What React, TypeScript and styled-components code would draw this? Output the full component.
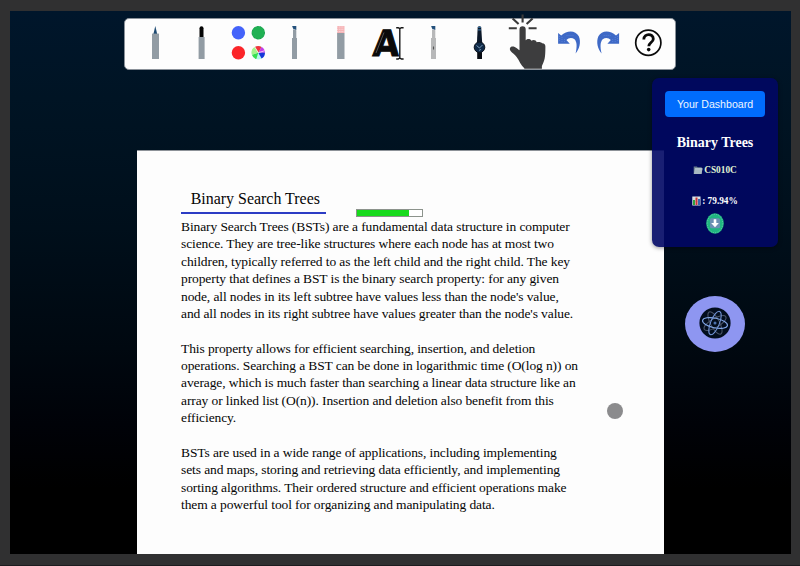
import React from "react";
import styled, { createGlobalStyle } from "styled-components";

const GlobalStyle = createGlobalStyle`
  * { box-sizing: border-box; }
  body { margin: 0; overflow: hidden; background: #303031; }
`;

const Frame = styled.div`
  width: 800px;
  height: 566px;
  padding: 11px 9px 12px 10px;
  background: #303031;
  border-bottom: 1px solid #1c1c1f;
`;

const Workspace = styled.main`
  position: relative;
  height: 543px;
  overflow: hidden;
  display: flex;
  flex-direction: column;
  background: linear-gradient(180deg, #00162b 0%, #001424 16%, #000f1b 40%, #000810 62%, #000208 76%, #000000 88%);
`;

const Toolbar = styled.nav`
  width: 552px;
  height: 52px;
  flex: none;
  margin: 7px 0 0 114px;
  padding-left: 7.2px;
  display: flex;
  background: #fdfdfd;
  border: 1px solid #8a9199;
  border-width: 1px 0.5px 1.5px;
  border-radius: 5px;
`;

const Tool = styled.button<{ $width: number }>`
  width: ${(p) => p.$width}px;
  height: 51px;
  flex: none;
  margin-top: -1px;
  padding: 0;
  border: 0;
  background: none;

  svg {
    display: block;
    width: 100%;
    height: 51px;
    overflow: visible;
  }
`;

const Page = styled.article`
  width: 527px;
  height: 404px;
  flex: none;
  margin: 80px 0 0 127px;
  padding: 37px 44px 0;
  background: #fdfdfd;
  color: #050505;
  font-family: "Liberation Serif", "Times New Roman", serif;
  border-top: 1px solid #8d9298;
`;

const PageHeader = styled.header`
  display: flex;
  align-items: flex-end;
  height: 29px;
  margin-bottom: 1px;
`;

const PageTitle = styled.h1`
  width: 145px;
  height: 26px;
  margin: 0 29.5px 0 0;
  padding-left: 9.7px;
  border-bottom: 2px solid #2c3cc4;
  font-size: 15.95px;
  font-weight: 400;
  line-height: 21px;
  white-space: nowrap;
  align-self: flex-start;
`;

const Meter = styled.div`
  width: 67px;
  height: 8px;
  border: 1px solid #8c938c;
  background: #fff;
`;

const MeterFill = styled.div`
  height: 100%;
  background: #18da1c;
`;

const Paragraph = styled.p`
  margin: 0 0 17.37px;
  font-size: 13.5px;
  letter-spacing: -0.1px;
  line-height: 17.37px;
  white-space: pre;
  color: #050505;
`;

const Panel = styled.aside`
  position: absolute;
  left: 642px;
  top: 67px;
  width: 126px;
  height: 169px;
  padding-top: 13px;
  display: flex;
  flex-direction: column;
  align-items: center;
  border-radius: 7px;
  background: rgba(0, 7, 100, 0.9);
  box-shadow: 0 1px 4px rgba(0, 0, 0, 0.4);
  color: #fff;
  font-family: "Liberation Serif", "Times New Roman", serif;
`;

const DashboardButton = styled.button`
  width: 100px;
  height: 26px;
  flex: none;
  padding: 0;
  border: 0;
  border-radius: 4px;
  background: #006cfd;
  color: #eef5ff;
  font: 10.6px/25px "Liberation Sans", Arial, sans-serif;
  white-space: nowrap;
`;

const PanelTitle = styled.h2`
  margin: 17px 0 0;
  font-size: 14px;
  line-height: 18px;
  font-weight: 700;
`;

const Detail = styled.div<{ $gap: number; $tint: string }>`
  display: flex;
  align-items: center;
  gap: 1px;
  height: 12px;
  margin-top: ${(p) => p.$gap}px;
  font-size: 9.3px;
  font-weight: 700;
  line-height: 12px;
  color: ${(p) => p.$tint};
`;

const DownloadButton = styled.button`
  width: 18px;
  height: 21px;
  margin-top: 5.5px;
  padding: 0;
  border: 0;
  background: none;
  svg { display: block; }
`;

const Orb = styled.button`
  position: absolute;
  left: 675px;
  top: 285px;
  width: 60px;
  height: 56px;
  padding: 0 0 3px;
  display: grid;
  place-items: center;
  border: 0;
  border-radius: 50%;
  background: #8e96f1;
`;

const Pointer = styled.div`
  position: absolute;
  left: 597px;
  top: 392px;
  width: 16px;
  height: 16px;
  border-radius: 50%;
  background: #8b8b8d;
`;

const STEEL = "#929ca4";

const InkPen = () => (
  <svg viewBox="0 0 46.3 51">
    <path d="M23.3 8 25.2 16h-3.8z" fill="#1d4a72" />
    <rect x="20" y="15.6" width="7" height="25.4" fill={STEEL} />
  </svg>
);

const Marker = () => (
  <svg viewBox="0 0 46.3 51">
    <path d="M21.5 19.5v-9.3q0-2 2-2t2 2v9.3z" fill="#050505" />
    <rect x="20.6" y="19" width="6" height="22" fill={STEEL} />
  </svg>
);

const Palette = () => (
  <svg viewBox="0 0 46.3 51">
    <circle cx="13.4" cy="14.7" r="6.7" fill="#4463fa" />
    <circle cx="33.3" cy="14.7" r="6.7" fill="#20b153" />
    <circle cx="33.3" cy="14.7" r="6.2" fill="none" stroke="#168c50" strokeWidth=".8" strokeDasharray="1 2.4" />
    <circle cx="13.4" cy="34.7" r="6.7" fill="#fb2529" />
    <g transform="translate(33.3 34.7)">
      <circle r="6.7" fill="#b5f7ea" />
      <path d="M0 0-3.5-5.7A6.7 6.7 0 0 1 3.3-5.8z" fill="#f1343c" />
      <path d="M0 0 3.3-5.8A6.7 6.7 0 0 1 6.7 0z" fill="#c83be8" />
      <path d="M0 0H6.7A6.7 6.7 0 0 1 3.3 5.8z" fill="#1635d9" />
      <path d="M0 0-6.4 2A6.7 6.7 0 0 0-2 6.4z" fill="#36df50" />
      <path d="M0 0-6.4 2A6.7 6.7 0 0 1-3.5-5.7z" fill="#a5f28a" />
      <path d="M0 0-3.5-5.7M0 0 6.5-2" stroke="#fff" strokeWidth=".7" />
    </g>
  </svg>
);

const Highlighter = ({ body = STEEL, dot = false }: { body?: string; dot?: boolean }) => (
  <svg viewBox="0 0 46.3 51">
    <path d="M21.1 8h4.2v3.9l-3-1z" fill="#24517c" />
    <path d="M22 11.2l3.3 1V21H22z" fill={body} />
    <rect x="21" y="20" width="5" height="21" fill={body} />
    {dot && <path d="M23.5 28.5v3" stroke="#555" strokeWidth="1.1" />}
  </svg>
);

const Eraser = () => (
  <svg viewBox="0 0 46.3 51">
    <rect x="20.1" y="15" width="7.4" height="26" fill={STEEL} />
    <rect x="20.1" y="8" width="7.4" height="7" fill="#f6b3b5" />
    <path d="M20.1 9h7.4M20.1 11.3h7.4M20.1 13.6h7.4" stroke="#fbe0e4" strokeWidth="1" strokeDasharray="1.1 1.1" />
  </svg>
);

const TextTool = () => (
  <svg viewBox="0 0 46.3 51">
    <text
      transform="translate(8.2 37.6) skewX(-3)"
      fontFamily="DejaVu Sans, sans-serif"
      fontSize="36"
      fontWeight="700"
      textLength="26.5"
      lengthAdjust="spacingAndGlyphs"
      fill="#0a0a0a"
      stroke="#0a0a0a"
      strokeWidth="1"
    >
      A
    </text>
    <path d="M12 35 20 14.5" stroke="#666" strokeWidth=".8" />
    <path d="M32.2 9.7h2l1.6 1 1.6-1h2.2M32.2 41h2l1.6-1 1.6 1h2.2M35.8 10.5v29.7" fill="none" stroke="#151515" strokeWidth="1.4" />
  </svg>
);

const Watch = () => (
  <svg viewBox="0 0 46.3 51">
    <path d="M21.7 9q1.8-1.5 3.5 0l1 16h-5.3z" fill="#0b1829" />
    <path d="M22 9.4h3M22 11.8h3" stroke="#2c6190" strokeWidth="1.2" />
    <path d="M21.2 33h4.8v8h-4.8z" fill="#070b12" />
    <circle cx="23.5" cy="29.3" r="5.3" fill="#102a48" stroke="#0b1119" strokeWidth="1" />
    <path d="M20.5 27.5 23.5 30l3-3M23 32.4l2-1" fill="none" stroke="#8fb2d0" strokeWidth=".8" />
  </svg>
);

const ClickHand = () => (
  <svg viewBox="0 0 46.3 51">
    <g stroke="#3a3a3a" strokeWidth="2.1">
      <path d="M19.6-3.6v8M9.6.4l6 5.6M29.6.4l-6 5.6M5.8 10.2h8M25.6 10.2h8" />
    </g>
    <path
      d="M16.5 11.4a3.1 3.1 0 0 1 6.2 0V22.2c1.8-2 5-1.6 5.7.6 2-1.5 4.7-.7 5.3 1.5 2.1-.9 4.9 0 5.5 1 2.3.1 3.2 1.4 3.2 3.3 0 12-.9 14-3.5 19.5v2.7H21.3v-.5c-3.4-3-5-7.7-7.7-11.3-1.8-2.4-4.3-4-6-6-2.2-3.2 1-5.6 4.1-4 2 .8 3.1 2.4 4.8 3.3z"
      fill="#3d3d3e"
    />
  </svg>
);

const Arrow = ({ flip = false }: { flip?: boolean }) => (
  <svg viewBox="0 0 40 51">
    <g transform={flip ? "translate(39.2 0) scale(-1 1)" : undefined}>
      <path
        d="M9.1 14.9 12.2 17.6C18 12 26.5 12.1 29.8 18.2 32.4 24.2 30.3 31 26.6 35.5 28.2 28.5 28 24 25.5 21.3 22.7 19.1 19.5 19.8 17.4 22L20.8 25.8H9.1z"
        fill="#3e69c6"
      />
      <path d="M10.6 18v6M13 19v5M15.5 21v3M17.5 17.4h8" stroke="#5b83db" strokeWidth=".8" strokeDasharray="1 1" />
    </g>
  </svg>
);

const Help = () => (
  <svg viewBox="0 0 40 51">
    <circle cx="19.3" cy="24.7" r="12.6" fill="#fff" stroke="#0b0b0b" strokeWidth="1.7" />
    <path d="M14.8 21.4c.1-6.4 9.6-6.2 9.5-.5-.1 3.5-4.5 3.8-4.5 7.3" fill="none" stroke="#0b0b0b" strokeWidth="2.8" />
    <circle cx="19.7" cy="31.6" r="1.8" fill="#0b0b0b" />
  </svg>
);

const FolderIcon = () => (
  <svg width="10" height="9" viewBox="0 0 10 9">
    <path d="M.7 .4h3.2l.8.8h4v1.2H9.6L8.2 8H.7z" fill="#687d8d" />
    <path d="M1.8 2.3h7.7L8.6 7.9H.9z" fill="#a8b8c2" />
    <path d="M2.2 2.8h6.9" stroke="#d1dde1" strokeWidth=".6" />
  </svg>
);

const ChartIcon = () => (
  <svg width="9" height="10" viewBox="0 0 9 10">
    <rect x=".3" y=".5" width="8.2" height="9" fill="#dce5e7" />
    <path d="M1 3h7M1 5.5h7" stroke="#a8b7bd" strokeWidth=".4" />
    <rect x="1" y="4" width="2" height="5" fill="#2fa13c" />
    <rect x="3.5" y="1.5" width="2" height="7.5" fill="#cb3137" />
    <rect x="6" y="3" width="2" height="6" fill="#3868ad" />
  </svg>
);

const DownloadIcon = () => (
  <svg width="18" height="21" viewBox="0 0 18 21">
    <ellipse cx="9" cy="10.5" rx="8.8" ry="10.3" fill="#20b681" />
    <ellipse cx="9" cy="10.5" rx="7.7" ry="9.2" fill="none" stroke="#74d5af" strokeWidth=".8" strokeDasharray="1 1.4" />
    <rect x="4" y="5.3" width="10" height="10" rx="1.5" fill="#6b90b3" />
    <path d="M7.7 6.2h2.6V10h2.6L9 14.2 5.1 10h2.6z" fill="#fff" />
  </svg>
);

const AtomIcon = () => (
  <svg width="32" height="32" viewBox="-16 -16 32 32">
    <circle r="15.6" fill="#020d1d" />
    <g fill="none">
      <g stroke="#4a5468" strokeWidth="1">
        <ellipse rx="12.5" ry="4.5" transform="rotate(-30)" />
        <ellipse rx="12.5" ry="4.5" transform="rotate(62)" />
      </g>
      <ellipse rx="12.7" ry="4.8" transform="rotate(12)" stroke="#82a8e8" strokeWidth="1.1" />
      <ellipse rx="12.5" ry="4.4" transform="rotate(112)" stroke="#7193d5" strokeWidth="1.1" />
    </g>
    <circle r="1.5" fill="#4d72ac" />
  </svg>
);

const tools = [
  { name: "Pen", width: 46.3, icon: <InkPen /> },
  { name: "Marker", width: 46.3, icon: <Marker /> },
  { name: "Colors", width: 46.3, icon: <Palette /> },
  { name: "Highlighter", width: 46.3, icon: <Highlighter /> },
  { name: "Eraser", width: 46.3, icon: <Eraser /> },
  { name: "Text", width: 46.3, icon: <TextTool /> },
  { name: "Laser", width: 46.3, icon: <Highlighter body="#b7b8b9" dot /> },
  { name: "Timer", width: 46.3, icon: <Watch /> },
  { name: "Select", width: 46.3, icon: <ClickHand /> },
  { name: "Undo", width: 40, icon: <Arrow /> },
  { name: "Redo", width: 40, icon: <Arrow flip /> },
  { name: "Help", width: 40, icon: <Help /> },
];

const paragraphs = [
  `Binary Search Trees (BSTs) are a fundamental data structure in computer
science. They are tree-like structures where each node has at most two
children, typically referred to as the left child and the right child. The key
property that defines a BST is the binary search property: for any given
node, all nodes in its left subtree have values less than the node's value,
and all nodes in its right subtree have values greater than the node's value.`,
  `This property allows for efficient searching, insertion, and deletion
operations. Searching a BST can be done in logarithmic time (O(log n)) on
average, which is much faster than searching a linear data structure like an
array or linked list (O(n)). Insertion and deletion also benefit from this
efficiency.`,
  `BSTs are used in a wide range of applications, including implementing
sets and maps, storing and retrieving data efficiently, and implementing
sorting algorithms. Their ordered structure and efficient operations make
them a powerful tool for organizing and manipulating data.`,
];

export default function App() {
  return (
    <Frame>
      <GlobalStyle />
      <Workspace>
        <Toolbar>
          {tools.map((tool) => (
            <Tool key={tool.name} $width={tool.width} aria-label={tool.name}>
              {tool.icon}
            </Tool>
          ))}
        </Toolbar>
        <Page>
          <PageHeader>
            <PageTitle>Binary Search Trees</PageTitle>
            <Meter>
              <MeterFill style={{ width: "81%" }} />
            </Meter>
          </PageHeader>
          {paragraphs.map((text) => (
            <Paragraph key={text}>{text}</Paragraph>
          ))}
        </Page>
        <Panel>
          <DashboardButton>Your Dashboard</DashboardButton>
          <PanelTitle>Binary Trees</PanelTitle>
          <Detail $gap={12} $tint="#e0f4d3">
            <FolderIcon />
            <span>CS010C</span>
          </Detail>
          <Detail $gap={19} $tint="#ffffff">
            <ChartIcon />
            <span>: 79.94%</span>
          </Detail>
          <DownloadButton aria-label="Download">
            <DownloadIcon />
          </DownloadButton>
        </Panel>
        <Orb aria-label="Assistant">
          <AtomIcon />
        </Orb>
        <Pointer />
      </Workspace>
    </Frame>
  );
}
